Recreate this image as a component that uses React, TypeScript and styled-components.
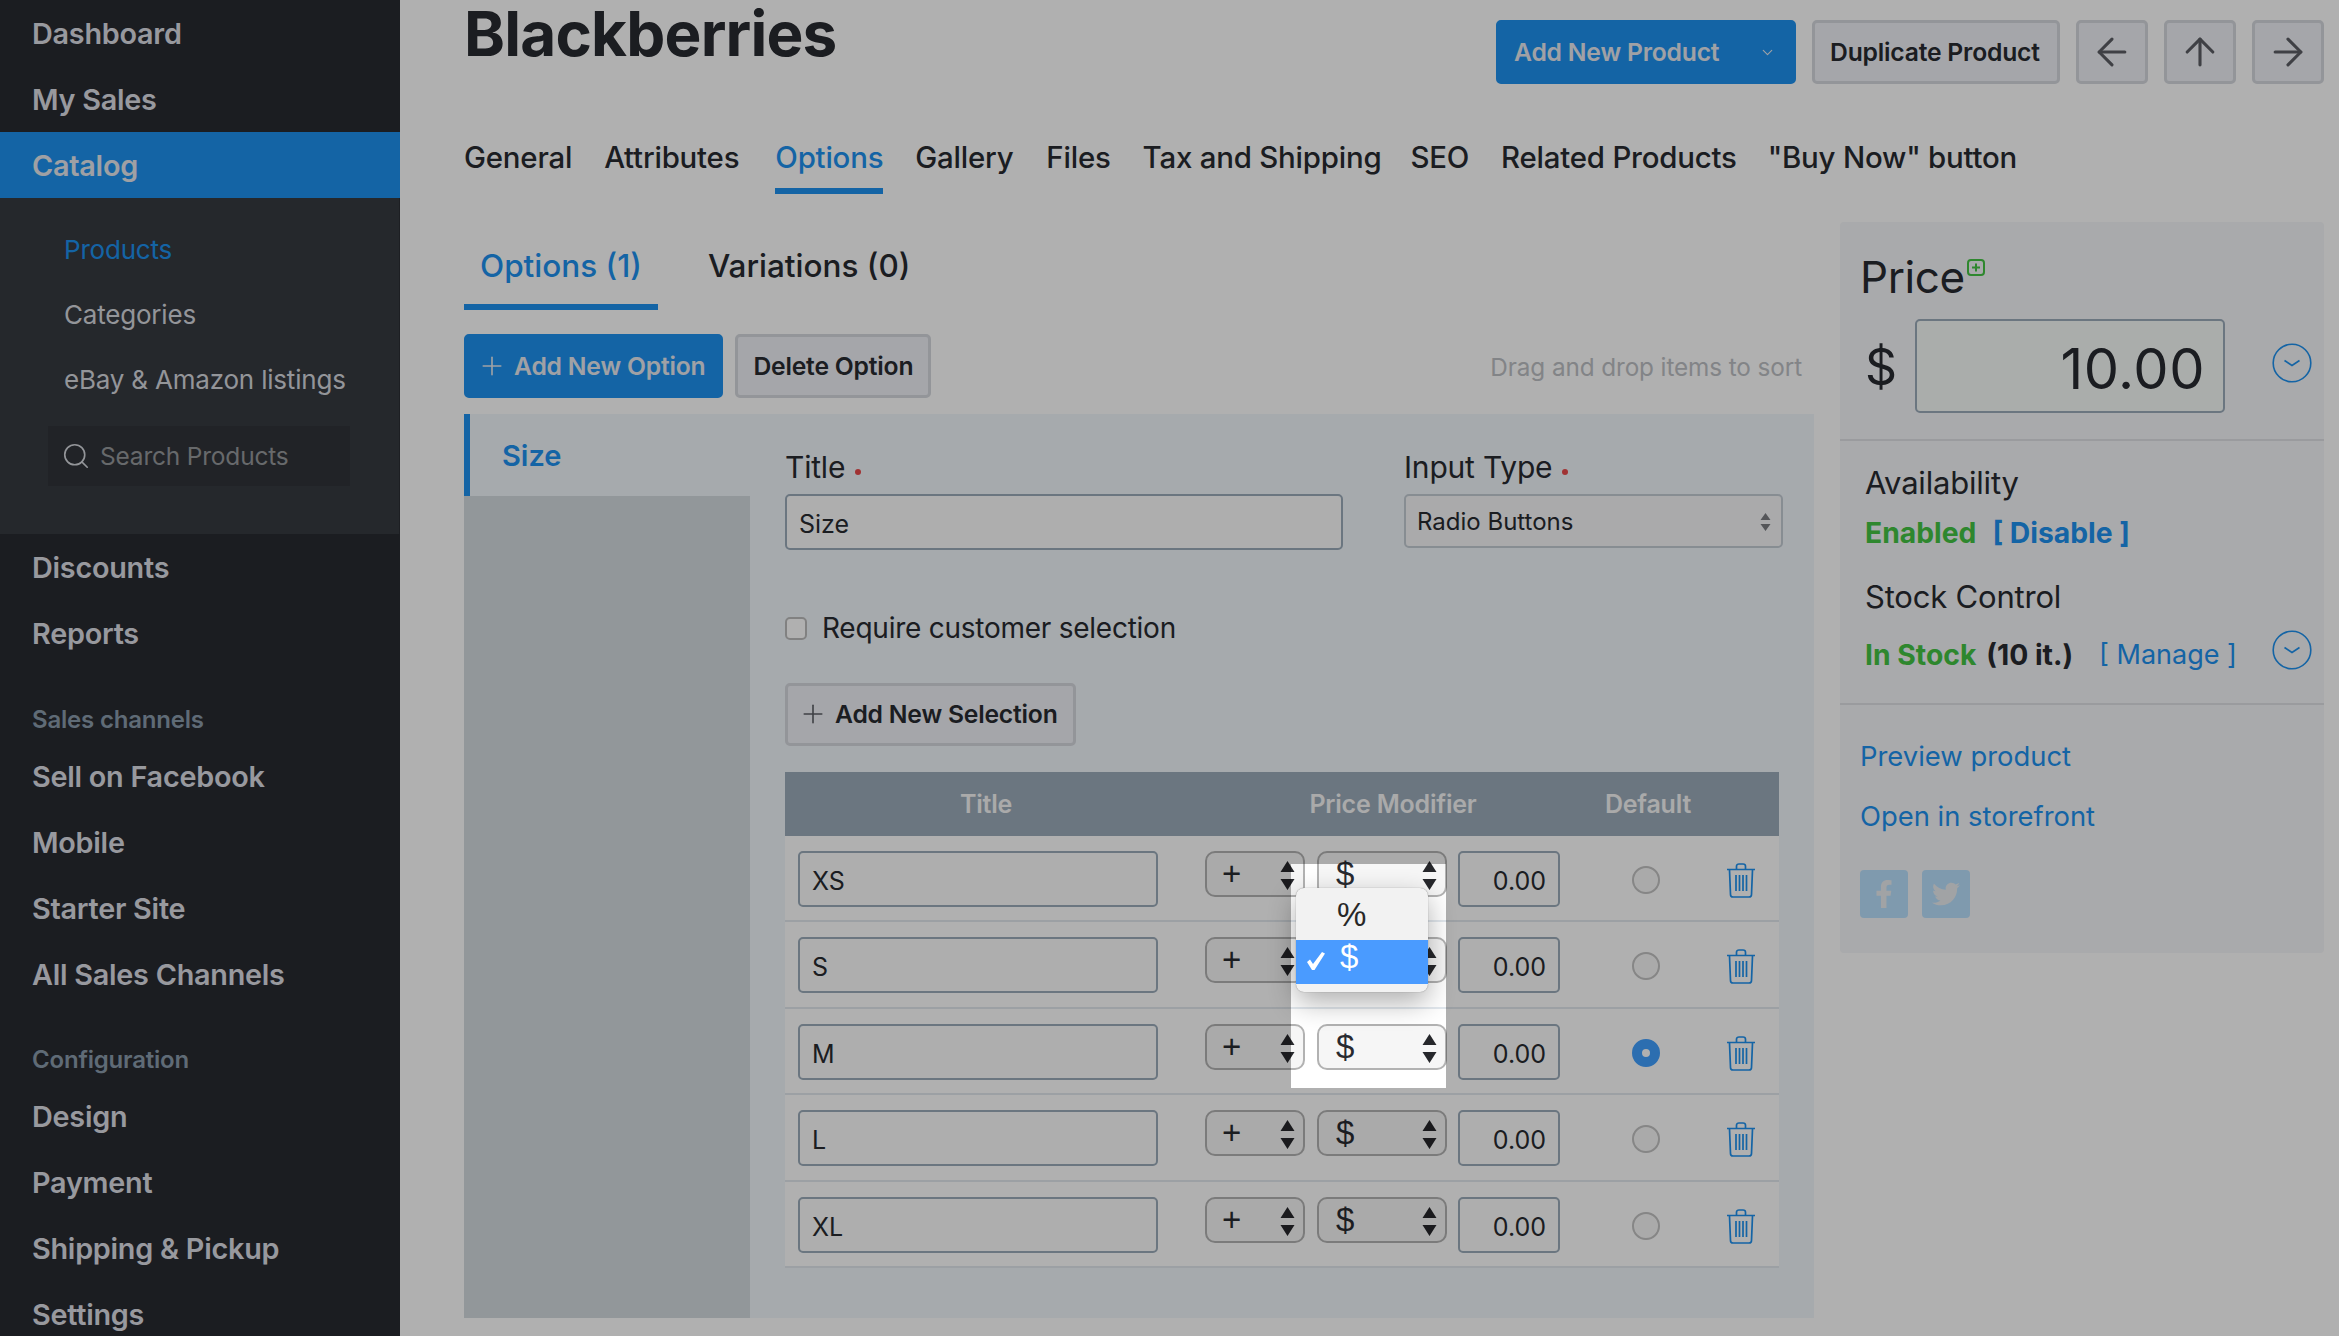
import styled, { createGlobalStyle } from "styled-components"
import { ArrowLeft, ArrowRight, ArrowUp, ChevronDown, Plus, Search } from "lucide-react"
import { FaFacebookF, FaTwitter } from "react-icons/fa"

const dark = "#282a30"
const blue = "#1d91ef"

const GlobalStyle = createGlobalStyle`
  html, body {
    margin: 0;
    padding: 0;
    background: #fff;
    overflow: hidden;
  }
  * {
    box-sizing: border-box;
  }
  body {
    font-family: Inter, "Liberation Sans", sans-serif;
    color: ${dark};
  }
`

const Page = styled.div`
  position: relative;
  display: flex;
  width: 2339px;
  height: 1336px;
  overflow: hidden;
  background: #fff;
`

/* sidebar */
const Sidebar = styled.nav`
  flex: 0 0 400px;
  height: 1336px;
  overflow: hidden;
  background: #282a30;
`

const NavItem = styled.div<{ $active?: boolean }>`
  height: 66px;
  padding-left: 32px;
  line-height: 67px;
  font-size: 28.8px;
  font-weight: 600;
  letter-spacing: -0.25px;
  color: ${({ $active }) => ($active ? "#e6e8ee" : "#dcdee5")};
  background: ${({ $active }) => ($active ? blue : "transparent")};
`

const SubNav = styled.div`
  height: 336px;
  padding-top: 19px;
  background: #363a41;
  border-right: 1px solid #2a2d33;
`

const SubItem = styled.div<{ $active?: boolean }>`
  height: 65px;
  padding-left: 64px;
  line-height: 66px;
  font-size: 26px;
  letter-spacing: -0.2px;
  color: ${({ $active }) => ($active ? blue : "#d6d8de")};
`

const SearchBox = styled.div`
  display: flex;
  align-items: center;
  gap: 9px;
  width: 302px;
  height: 60px;
  margin: 14px 0 0 48px;
  padding-left: 13px;
  background: #303439;
  font-size: 24.5px;
  letter-spacing: -0.2px;
  color: #96989c;
`

const NavGroupTitle = styled.div<{ $top: number }>`
  height: 38px;
  margin: ${({ $top }) => $top}px 0 5px;
  padding-left: 32px;
  line-height: 40px;
  font-size: 24px;
  font-weight: 600;
  letter-spacing: -0.2px;
  color: #8a9bac;
`

/* main */
const Main = styled.main`
  flex: 1;
  padding: 0 15px 0 64px;
`

const Header = styled.header`
  display: flex;
  justify-content: space-between;
  height: 138px;
`

const Title = styled.h1`
  margin: 0;
  font-size: 62px;
  line-height: 68px;
  font-weight: 700;
  letter-spacing: -0.8px;
`

const HeaderActions = styled.div`
  display: flex;
  gap: 16px;
  padding-top: 20px;
`

const Button = styled.button<{ $primary?: boolean; $w?: number }>`
  display: inline-flex;
  align-items: center;
  gap: 7px;
  height: 64px;
  width: ${({ $w }) => ($w ? `${$w}px` : "auto")};
  padding: 0 15px;
  border-radius: 5px;
  border: 3px solid ${({ $primary }) => ($primary ? blue : "#d5d8de")};
  background: ${({ $primary }) => ($primary ? blue : "#eff1f6")};
  color: ${({ $primary }) => ($primary ? "#e8eaf0" : dark)};
  font-family: inherit;
  font-size: 24.7px;
  font-weight: 600;
  letter-spacing: -0.2px;
  white-space: nowrap;
`

const IconButton = styled(Button)`
  justify-content: center;
  width: 72px;
  padding: 0;
  color: #5c5e64;
`

const PlusIcon = styled(Plus)`
  flex: none;
  margin-left: -5px;
`

const Tabs = styled.div`
  display: flex;
  height: 84px;
`

const Tab = styled.div<{ $active?: boolean; $gap: number }>`
  height: 56px;
  margin-right: ${({ $gap }) => $gap}px;
  line-height: 40px;
  font-size: 29.4px;
  font-weight: 500;
  letter-spacing: -0.2px;
  color: ${({ $active }) => ($active ? blue : dark)};
  border-bottom: 6px solid ${({ $active }) => ($active ? blue : "transparent")};
`

const Columns = styled.div`
  display: flex;
  gap: 26px;
`

const Left = styled.div`
  flex: 0 0 1350px;
  padding-top: 24px;
`

const SubTabs = styled.div`
  display: flex;
`

const SubTab = styled.div<{ $active?: boolean }>`
  height: 64px;
  padding: 0 16px;
  margin-right: 34px;
  line-height: 40px;
  font-size: 31.5px;
  font-weight: 500;
  color: ${({ $active }) => ($active ? blue : dark)};
  border-bottom: 6px solid ${({ $active }) => ($active ? blue : "transparent")};
`

const OptionActions = styled.div`
  display: flex;
  align-items: center;
  gap: 12px;
  margin-top: 24px;
`

const Hint = styled.span`
  margin-left: auto;
  padding: 2px 12px 0 0;
  font-size: 24.3px;
  letter-spacing: -0.1px;
  color: #bdc0c4;
`

const OptionPanel = styled.div`
  display: flex;
  height: 904px;
  margin-top: 16px;
  background: #f1f6fb;
`

const OptionList = styled.div`
  flex: 0 0 286px;
  background: #d4dbdf;
`

const OptionItem = styled.div`
  height: 82px;
  padding-left: 32px;
  line-height: 84px;
  border-left: 6px solid ${blue};
  background: #f1f6fb;
  color: ${blue};
  font-size: 29px;
  font-weight: 600;
`

const OptionBody = styled.div`
  flex: 1;
  padding: 34px 31px 0 35px;
`

const FieldRow = styled.div`
  display: grid;
  grid-template-columns: 558px 379px;
  column-gap: 61px;
`

const Label = styled.div`
  height: 38px;
  margin-bottom: 8px;
  line-height: 38px;
  font-size: 30px;
  letter-spacing: -0.2px;
`

const Required = styled.span`
  display: inline-block;
  width: 6px;
  height: 6px;
  margin-left: 10px;
  vertical-align: 3px;
  border-radius: 50%;
  background: #e8494a;
`

const Input = styled.div<{ $w?: number; $right?: boolean }>`
  width: ${({ $w }) => ($w ? `${$w}px` : "100%")};
  height: 56px;
  padding: 0 12px;
  line-height: 57px;
  font-size: 25px;
  text-align: ${({ $right }) => ($right ? "right" : "left")};
  background: #fcfdfc;
  border: 2px solid #9babba;
  border-radius: 5px;
`

const NativeSelect = styled.div`
  display: flex;
  align-items: center;
  justify-content: space-between;
  height: 54px;
  padding: 1px 10px 0 11px;
  font-size: 24px;
  background: #f6f7f8;
  border: 2px solid #c4ccd4;
  border-radius: 5px;
`

const Stepper = styled.svg`
  display: block;
  flex: none;
`

const CheckRow = styled.label`
  display: flex;
  align-items: center;
  gap: 15px;
  height: 40px;
  margin-top: 58px;
  font-size: 28px;
  letter-spacing: -0.25px;
`

const Checkbox = styled.span`
  width: 22px;
  height: 23px;
  background: #fff;
  border: 2px solid #bcbcbc;
  border-radius: 5px;
`

const SelectionButton = styled(Button)`
  height: 63px;
  margin-top: 35px;
  padding-bottom: 2px;
`

const TableHead = styled.div`
  display: grid;
  grid-template-columns: 402px 412px 98px;
  width: 994px;
  height: 64px;
  margin-top: 26px;
  line-height: 64px;
  background: #9babba;
  color: #f6f6f6;
  font-size: 25px;
  font-weight: 600;
  letter-spacing: -0.2px;
  text-align: center;
`

const Row = styled.div`
  display: grid;
  grid-template-columns: 407px 112px 141px 102px 166px 30px;
  align-items: start;
  width: 994px;
  height: 86.4px;
  padding: 15px 0 0 13px;
  background: #fff;
  border-bottom: 2px solid #e2e8ee;
`

const MacSelect = styled.div<{ $w: number; $pad: number }>`
  display: flex;
  justify-content: space-between;
  width: ${({ $w }) => $w}px;
  height: 46px;
  padding: 8px 8px 0 ${({ $pad }) => $pad}px;
  background: #f6f6f6;
  border: 2px solid #b2b2b2;
  border-radius: 10px;
  font-family: "Liberation Sans", sans-serif;
  font-size: 33px;
  line-height: 26px;
`

const Radio = styled.span<{ $on?: boolean }>`
  display: block;
  width: 28px;
  height: 28px;
  margin: 15px 0 0 72px;
  border-radius: 50%;
  background: ${({ $on }) => ($on ? "#fff" : "#f7f7f7")};
  border: ${({ $on }) => ($on ? `10.5px solid #41a0ff` : "2px solid #c2c2c2")};
`

const TrashIcon = styled.svg`
  display: block;
  margin-top: 12px;
`

/* right panel */
const Side = styled.aside`
  flex: 0 0 484px;
  height: 731px;
  background: #f5f6f9;
  border-radius: 4px;
`

const SideSection = styled.div<{ $h: number; $border?: boolean; $top?: number }>`
  position: relative;
  height: ${({ $h }) => $h}px;
  padding: ${({ $top }) => $top ?? 0}px 0 0 20px;
  border-bottom: ${({ $border }) => ($border ? "2px solid #dfe1e5" : "none")};
`

const PriceTitle = styled.div`
  display: flex;
  align-items: flex-start;
  padding-top: 28px;
  height: 97px;
  line-height: 54px;
  font-size: 44px;
  letter-spacing: -0.4px;
`

const PriceIcon = styled.svg`
  margin: 9px 0 0 2px;
`

const PriceRow = styled.div`
  display: flex;
  align-items: center;
  height: 94px;
`

const Currency = styled.span`
  width: 55px;
  padding: 2px 0 0 5px;
  font-size: 50px;
`

const PriceInput = styled.div`
  width: 310px;
  height: 94px;
  padding-right: 18px;
  line-height: 96px;
  text-align: right;
  font-size: 56px;
  letter-spacing: 0.5px;
  background: #f7fbf8;
  border: 2px solid #9babba;
  border-radius: 5px;
`

const Round = styled.svg`
  margin: -7px 0 0 47px;
`

const RoundBottom = styled.svg`
  position: absolute;
  right: 12px;
  top: 189px;
`

const StatusLabel = styled.div<{ $top?: number }>`
  padding: ${({ $top }) => $top ?? 0}px 0 0 5px;
  line-height: 40px;
  font-size: 31px;
  letter-spacing: -0.2px;
`

const StatusLine = styled.div<{ $top: number; $gap: number }>`
  display: flex;
  gap: ${({ $gap }) => $gap}px;
  margin: ${({ $top }) => $top}px 0 24px;
  padding-left: 5px;
  line-height: 40px;
  font-size: 28.3px;
  white-space: nowrap;
`

const Green = styled.b`
  font-weight: 700;
  color: #43c443;
`

const Count = styled.b`
  margin-left: -16px;
  font-weight: 700;
`

const SideLink = styled.a<{ $bold?: boolean }>`
  display: block;
  color: ${blue};
  font-weight: ${({ $bold }) => ($bold ? 700 : 400)};
`

const Manage = styled(SideLink)`
  font-size: 27px;
`

const LinkItem = styled(SideLink)`
  height: 60px;
  line-height: 62px;
  font-size: 27.4px;
`

const Socials = styled.div`
  display: flex;
  gap: 14px;
  margin-top: 25px;
`

const Social = styled.span`
  display: flex;
  align-items: center;
  justify-content: center;
  width: 48px;
  height: 48px;
  border-radius: 4px;
  background: #b9dffc;
  color: #e9edf0;
  font-size: 28px;
`

/* the dimmed page with a hole over the select */
const Spotlight = styled.div`
  position: absolute;
  left: 1291px;
  top: 864px;
  width: 155px;
  height: 224px;
  z-index: 10;
  box-shadow: 0 0 0 3000px rgba(0, 0, 0, 0.31);
`

const Menu = styled.div`
  position: absolute;
  left: 1296px;
  top: 888px;
  z-index: 20;
  width: 132px;
  height: 104px;
  padding-top: 8px;
  background: #f2f2f2;
  border-radius: 8px;
  box-shadow: 0 10px 28px rgba(0, 0, 0, 0.32), 0 0 1px rgba(0, 0, 0, 0.5);
  font-family: "Liberation Sans", sans-serif;
  font-size: 33px;
  color: #282828;
`

const MenuItem = styled.div<{ $on?: boolean }>`
  position: relative;
  height: 44px;
  padding-left: ${({ $on }) => ($on ? 44 : 41)}px;
  line-height: ${({ $on }) => ($on ? 34 : 38)}px;
  background: ${({ $on }) => ($on ? "#4a9bff" : "transparent")};
  color: ${({ $on }) => ($on ? "#fff" : "inherit")};
`

const Tick = styled.svg`
  position: absolute;
  left: 11px;
  top: 12px;
`

const Arrows = () => (
  <Stepper width="15" height="29" viewBox="0 0 15 29">
    <path d="M7.5 0L14.5 11H.5zM7.5 29L.5 18h14z" fill="#26272b" />
  </Stepper>
)

const SmallArrows = () => (
  <Stepper width="11" height="18" viewBox="0 0 11 18">
    <path d="M5.5 0L10.5 7H.5zM5.5 18L.5 11h10z" fill="#7b7d82" />
  </Stepper>
)

const Trash = () => (
  <TrashIcon width="30" height="35" viewBox="0 0 30 35" fill="none" stroke={blue} strokeWidth="1.7">
    <path d="M1 6.5h28M10.5 6V3.2C10.5 1.8 11.5 1 13 1h4c1.500 0 2.500.8 2.500 2.200V6" />
    <path d="M3.500 7l1 24.500c0 1.600 1 2.500 2.500 2.500h16c1.500 0 2.500-.9 2.500-2.500l1-24.500" />
    <path d="M10 12v16M13.500 12v16M17 12v16M20.500 12v16" />
  </TrashIcon>
)

const roundChevron = (
  <>
    <circle cx="20" cy="20" r="18.800" fill="none" stroke={blue} strokeWidth="1.600" />
    <path d="M12.500 17.500L20 22.500l7.500-5" fill="none" stroke={blue} strokeWidth="1.600" />
  </>
)

const rows = ["XS", "S", "M", "L", "XL"]
const tabs: [string, number][] = [
  ["General", 32],
  ["Attributes", 36],
  ["Options", 32],
  ["Gallery", 33],
  ["Files", 32],
  ["Tax and Shipping", 29],
  ["SEO", 32],
  ["Related Products", 31],
  ['"Buy Now" button', 0],
]

export default function App() {
  return (
    <Page>
      <GlobalStyle />
      <Sidebar>
        <NavItem>Dashboard</NavItem>
        <NavItem>My Sales</NavItem>
        <NavItem $active>Catalog</NavItem>
        <SubNav>
          <SubItem $active>Products</SubItem>
          <SubItem>Categories</SubItem>
          <SubItem>eBay &amp; Amazon listings</SubItem>
          <SearchBox>
            <Search size={30} strokeWidth={1.3} color="#d6d8de" />
            Search Products
          </SearchBox>
        </SubNav>
        <NavItem>Discounts</NavItem>
        <NavItem>Reports</NavItem>
        <NavGroupTitle $top={34}>Sales channels</NavGroupTitle>
        <NavItem>Sell on Facebook</NavItem>
        <NavItem>Mobile</NavItem>
        <NavItem>Starter Site</NavItem>
        <NavItem>All Sales Channels</NavItem>
        <NavGroupTitle $top={33}>Configuration</NavGroupTitle>
        <NavItem>Design</NavItem>
        <NavItem>Payment</NavItem>
        <NavItem>Shipping &amp; Pickup</NavItem>
        <NavItem>Settings</NavItem>
      </Sidebar>

      <Main>
        <Header>
          <Title>Blackberries</Title>
          <HeaderActions>
            <Button $primary $w={300}>
              Add New Product
              <ChevronDown size={17} strokeWidth={1.6} style={{ marginLeft: "auto", marginRight: 2 }} />
            </Button>
            <Button $w={248}>Duplicate Product</Button>
            <IconButton><ArrowLeft size={44} strokeWidth={1.7} /></IconButton>
            <IconButton><ArrowUp size={44} strokeWidth={1.7} /></IconButton>
            <IconButton><ArrowRight size={44} strokeWidth={1.7} /></IconButton>
          </HeaderActions>
        </Header>

        <Tabs>
          {tabs.map(([name, gap]) => (
            <Tab key={name} $gap={gap} $active={name === "Options"}>{name}</Tab>
          ))}
        </Tabs>

        <Columns>
          <Left>
            <SubTabs>
              <SubTab $active>Options (1)</SubTab>
              <SubTab>Variations (0)</SubTab>
            </SubTabs>
            <OptionActions>
              <Button $primary>
                <PlusIcon size={30} strokeWidth={1.3} />
                Add New Option
              </Button>
              <Button>Delete Option</Button>
              <Hint>Drag and drop items to sort</Hint>
            </OptionActions>

            <OptionPanel>
              <OptionList>
                <OptionItem>Size</OptionItem>
              </OptionList>
              <OptionBody>
                <FieldRow>
                  <div>
                    <Label>Title<Required /></Label>
                    <Input>Size</Input>
                  </div>
                  <div>
                    <Label>Input Type<Required /></Label>
                    <NativeSelect>
                      Radio Buttons
                      <SmallArrows />
                    </NativeSelect>
                  </div>
                </FieldRow>
                <CheckRow>
                  <Checkbox />
                  Require customer selection
                </CheckRow>
                <SelectionButton>
                  <PlusIcon size={30} strokeWidth={1.3} color="#5c5e64" />
                  Add New Selection
                </SelectionButton>
                <TableHead>
                  <span>Title</span>
                  <span>Price Modifier</span>
                  <span>Default</span>
                </TableHead>
                {rows.map((name) => (
                  <Row key={name}>
                    <Input $w={360}>{name}</Input>
                    <MacSelect $w={100} $pad={15}>+<Arrows /></MacSelect>
                    <MacSelect $w={130} $pad={17}>$<Arrows /></MacSelect>
                    <Input $w={102} $right>0.00</Input>
                    <Radio $on={name === "M"} />
                    <Trash />
                  </Row>
                ))}
              </OptionBody>
            </OptionPanel>
          </Left>

          <Side>
            <SideSection $h={219} $border>
              <PriceTitle>
                Price
                <PriceIcon width="18" height="17" viewBox="0 0 18 17" fill="none" stroke="#43c443" strokeWidth="2">
                  <rect x="1" y="1" width="16" height="15" rx="3" />
                  <path d="M9 4.500v8M5 8.500h8" />
                </PriceIcon>
              </PriceTitle>
              <PriceRow>
                <Currency>$</Currency>
                <PriceInput>10.00</PriceInput>
                <Round width="40" height="40" viewBox="0 0 40 40">{roundChevron}</Round>
              </PriceRow>
            </SideSection>
            <SideSection $h={264} $border>
              <StatusLabel $top={22}>Availability</StatusLabel>
              <StatusLine $top={10} $gap={16}>
                <Green>Enabled</Green>
                <SideLink $bold>[ Disable ]</SideLink>
              </StatusLine>
              <StatusLabel>Stock Control</StatusLabel>
              <StatusLine $top={18} $gap={26}>
                <Green>In Stock</Green>
                <Count>(10 it.)</Count>
                <Manage>[ Manage ]</Manage>
              </StatusLine>
              <RoundBottom width="40" height="40" viewBox="0 0 40 40">{roundChevron}</RoundBottom>
            </SideSection>
            <SideSection $h={240} $top={20}>
              <LinkItem>Preview product</LinkItem>
              <LinkItem>Open in storefront</LinkItem>
              <Socials>
                <Social><FaFacebookF /></Social>
                <Social><FaTwitter /></Social>
              </Socials>
            </SideSection>
          </Side>
        </Columns>
      </Main>

      <Spotlight />
      <Menu>
        <MenuItem>%</MenuItem>
        <MenuItem $on>
          <Tick width="18" height="18" viewBox="0 0 18 18">
            <path d="M0 10l3-2.500 3 4.500L15 0l3 1.500L7.500 18h-2.500z" fill="#fff" />
          </Tick>
          $
        </MenuItem>
      </Menu>
    </Page>
  )
}
